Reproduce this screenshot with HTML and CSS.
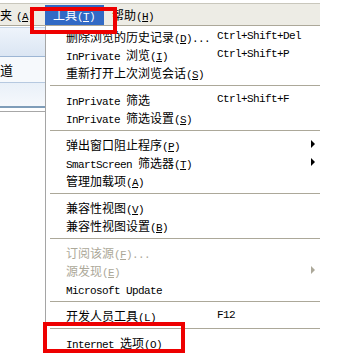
FILE: index.html
```html
<!DOCTYPE html>
<html lang="zh-CN">
<head>
    <meta charset="UTF-8">
    <title>工具菜单</title>
    <link rel="stylesheet" href="styles.css">
</head>
<body>

    <!-- Menu bar -->
    <div class="menubar">
        <span class="mb-item first">夹<span class="en gap">(<u>A</u>)</span></span>
        <span class="mb-item active">工具<span class="en">(<u>T</u>)</span></span>
        <span class="mb-item">帮助<span class="en">(<u>H</u>)</span></span>
    </div>

    <div class="main">
        <!-- Left side of the window -->
        <div class="pane">
            <div class="pane-head"></div>
            <div class="pane-row">道</div>
            <div class="pane-row2"></div>
            <div class="pane-foot"></div>
        </div>

        <!-- Tools dropdown -->
        <div class="menu">
            <div class="item"><span class="label">删除浏览的历史记录<span class="en">(<u>D</u>)...</span></span><span class="short en">Ctrl+Shift+Del</span></div>
            <div class="item"><span class="label"><span class="en">InPrivate </span>浏览<span class="en">(<u>I</u>)</span></span><span class="short en">Ctrl+Shift+P</span></div>
            <div class="item"><span class="label">重新打开上次浏览会话<span class="en">(<u>S</u>)</span></span></div>
            <div class="sep"></div>
            <div class="item"><span class="label"><span class="en">InPrivate </span>筛选</span><span class="short en">Ctrl+Shift+F</span></div>
            <div class="item"><span class="label"><span class="en">InPrivate </span>筛选设置<span class="en">(<u>S</u>)</span></span></div>
            <div class="sep"></div>
            <div class="item"><span class="label">弹出窗口阻止程序<span class="en">(<u>P</u>)</span></span><span class="arrow"></span></div>
            <div class="item"><span class="label"><span class="en">SmartScreen </span>筛选器<span class="en">(<u>T</u>)</span></span><span class="arrow"></span></div>
            <div class="item"><span class="label">管理加载项<span class="en">(<u>A</u>)</span></span></div>
            <div class="sep"></div>
            <div class="item"><span class="label">兼容性视图<span class="en">(<u>V</u>)</span></span></div>
            <div class="item"><span class="label">兼容性视图设置<span class="en">(<u>B</u>)</span></span></div>
            <div class="sep"></div>
            <div class="item disabled"><span class="label">订阅该源<span class="en">(<u>F</u>)...</span></span></div>
            <div class="item disabled"><span class="label">源发现<span class="en">(<u>E</u>)</span></span><span class="arrow"></span></div>
            <div class="item"><span class="label"><span class="en">Microsoft Update</span></span></div>
            <div class="sep"></div>
            <div class="item"><span class="label">开发人员工具<span class="en">(<u>L</u>)</span></span><span class="short en">F12</span></div>
            <div class="sep"></div>
            <div class="item"><span class="label"><span class="en">Internet </span>选项<span class="en">(<u>O</u>)</span></span></div>
        </div>
    </div>

    <!-- Red marks -->
    <div class="mark mark-top"></div>
    <div class="mark mark-bottom"></div>

</body>
</html>
```

FILE: styles.css
```css
/* Page */
body {
    margin: 0;
    background: #fff;
    font-family: "Noto Sans CJK SC", "Liberation Sans", sans-serif;
    font-size: 12px;
    color: #000;
    position: relative;
    height: 360px;
    overflow: hidden;
}

/* Half-width latin text, 6px per char */
.en {
    font-family: "Liberation Mono", monospace;
    font-size: 11px;
    letter-spacing: -0.6px;
    white-space: pre;
}

.en.gap {
    margin-left: 4px;
}

u {
    text-decoration-thickness: 1px;
    text-underline-offset: 1px;
}

/* Menu bar */
.menubar {
    margin-top: 3px;
    width: 320px;
    height: 21px;
    display: flex;
    align-items: flex-end;
    background: #edece5;
    border-top: 1px solid #c9c7bc;
    border-bottom: 1px solid #aca899;
}

.mb-item {
    height: 20px;
    line-height: 20px;
    padding: 0 9px 0 8px;
    white-space: nowrap;
}

.mb-item.first {
    width: 45px;
    padding: 0;
    box-sizing: border-box;
}

.mb-item.active {
    background: #316ac5;
    color: #fff;
}

/* Main area */
.main {
    display: flex;
}

.pane {
    width: 45px;
    flex-shrink: 0;
}

.pane-head {
    height: 28px;
    margin-top: 1px;
    border-top: 1px solid #c7d7ea;
    border-bottom: 1px solid #9db6d4;
    background: linear-gradient(#eef4fb, #dbe6f3);
}

.pane-row {
    height: 25px;
    line-height: 25px;
    font-size: 13px;
    background: #f6f9fc;
    border-bottom: 1px solid #b6c9e0;
}

.pane-row2 {
    height: 23px;
    background: linear-gradient(#e9f0f8, #f5f8fc);
    border-bottom: 2px solid #7f9db9;
}

.pane-foot {
    height: 1px;
    margin-top: 3px;
    background: #a7a7a7;
}

/* Dropdown */
.menu {
    width: 274px;
    border-left: 1px solid #a5a5a5;
    padding-top: 1px;
    background: #fff;
}

.item {
    height: 18px;
    display: flex;
    align-items: center;
    padding-left: 20px;
    white-space: nowrap;
}

.label {
    width: 151px;
    flex-shrink: 0;
}

.short {
    flex: 1;
}

.arrow {
    margin-left: auto;
    margin-right: 5px;
    width: 0;
    height: 0;
    border-left: 4px solid #000;
    border-top: 4px solid transparent;
    border-bottom: 4px solid transparent;
}

.item.disabled {
    color: #aca899;
}

.item.disabled .arrow {
    border-left-color: #aca899;
}

.sep {
    height: 1px;
    margin: 4px 0 4px 4px;
    background: #aca899;
}

/* Red marks */
.mark {
    position: absolute;
    border: 4px solid #ee0000;
    box-sizing: border-box;
    z-index: 2;
}

.mark-top {
    left: 30px;
    top: 7px;
    width: 87px;
    height: 27px;
}

.mark-bottom {
    left: 43px;
    top: 322px;
    width: 142px;
    height: 31px;
}
```
